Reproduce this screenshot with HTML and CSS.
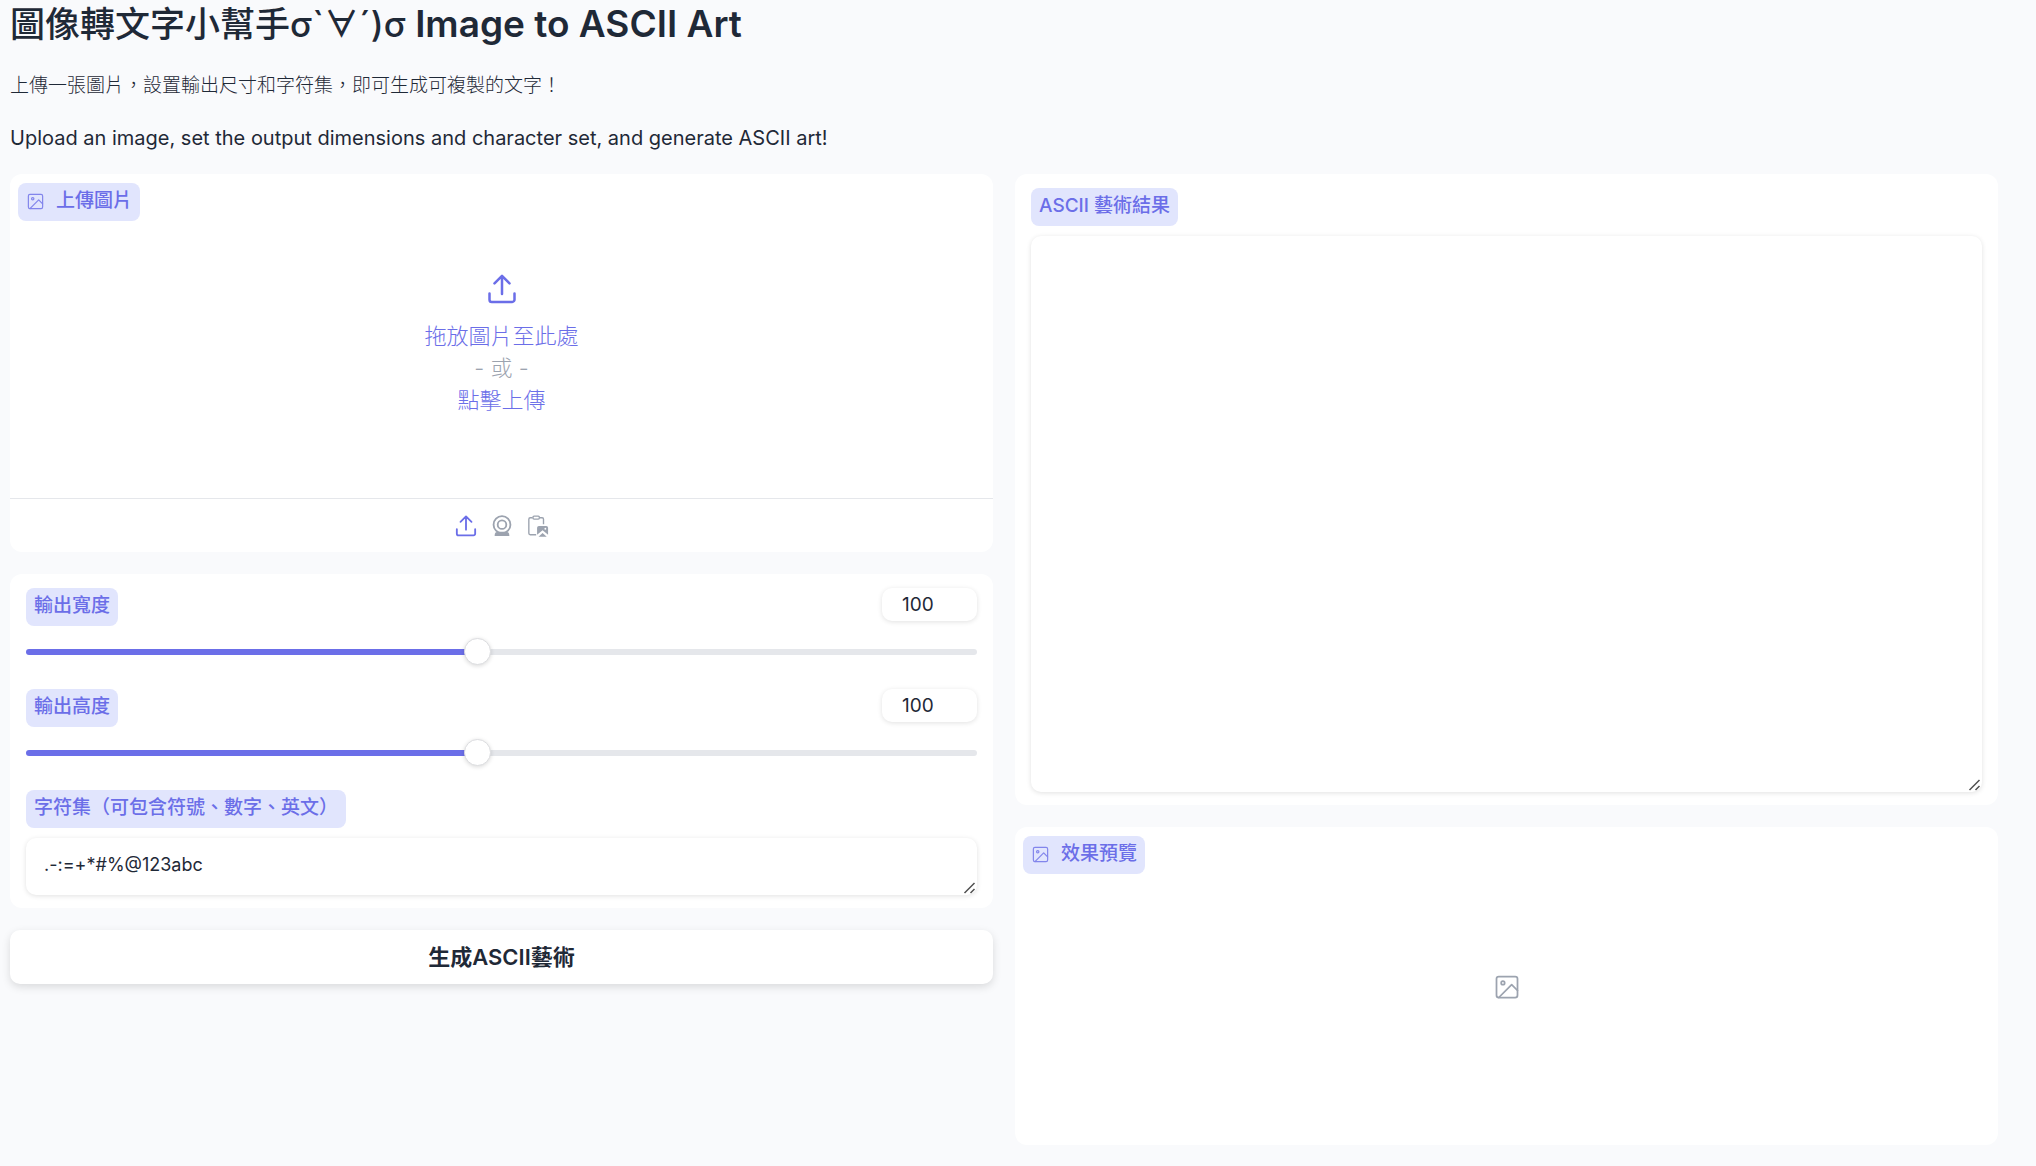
FILE: index.html
```html
<!DOCTYPE html>
<html lang="zh-Hant">
<head>
<meta charset="utf-8">
<meta name="viewport" content="width=device-width, initial-scale=1">
<title>圖像轉文字小幫手</title>
<link rel="stylesheet" href="styles.css">
</head>
<body>
<svg class="sprite" aria-hidden="true">
  <symbol id="icon-image" viewBox="0 0 24 24" fill="none" stroke="currentColor" stroke-width="1.5" stroke-linecap="round" stroke-linejoin="round">
    <rect x="3" y="3" width="18" height="18" rx="2"/>
    <circle cx="8.5" cy="8.5" r="1.5"/>
    <path d="M21 15l-5-5L5 21"/>
  </symbol>
  <symbol id="icon-upload" viewBox="0 0 24 24" fill="none" stroke="currentColor" stroke-width="2" stroke-linecap="round" stroke-linejoin="round">
    <path d="M2 15.500v5A1.800 1.800 0 0 0 3.800 22.300h16.400A1.800 1.800 0 0 0 22 20.500v-5M12 16V1.500M6 7.500l6-6 6 6"/>
  </symbol>
  <symbol id="icon-webcam" viewBox="0 0 24 24" fill="none" stroke="currentColor" stroke-width="2">
    <circle cx="12" cy="10.500" r="9.200"/>
    <circle cx="12" cy="10.500" r="4.700"/>
    <path d="M5 22c0-2 1.500-2.700 3-2.700h8c1.500 0 3 .7 3 2.700z" fill="currentColor"/>
  </symbol>
  <symbol id="icon-paste" viewBox="0 0 24 24" fill="none" stroke="currentColor" stroke-width="1.500">
    <path d="M10 21.500H3.500a1.500 1.500 0 0 1-1.500-1.500V4.500A1.500 1.500 0 0 1 3.500 3H6m8 0h2.500A1.500 1.500 0 0 1 18 4.500V10"/>
    <rect x="6.500" y="1.200" width="7" height="3.300" rx="1.200"/>
    <path d="M13 12h8a2 2 0 0 1 2 2v7.500l-6-5-6 5V14a2 2 0 0 1 2-2zM12.500 23.700l4.500-4.200 4.500 4.200z" fill="currentColor" stroke="none"/>
    <circle cx="20" cy="15" r="1" fill="#fff" stroke="none"/>
  </symbol>
</svg>
<main class="app">
  <header class="intro">
    <h1 class="title">圖像轉文字小幫手σ`∀´)σ <span class="title-en" lang="en">Image to ASCII Art</span></h1>
    <p class="lead">上傳一張圖片，設置輸出尺寸和字符集，即可生成可複製的文字！</p>
    <p class="lead lead-en" lang="en">Upload an image, set the output dimensions and character set, and generate ASCII art!</p>
  </header>
  <div class="columns">
    <div class="column">
      <section class="card upload">
        <h2 class="tag tag-icon"><svg class="tag-svg"><use href="#icon-image"/></svg>上傳圖片</h2>
        <button type="button" class="dropzone">
          <svg class="drop-svg"><use href="#icon-upload"/></svg>
          <span>拖放圖片至此處</span>
          <span class="or">- 或 -</span>
          <span>點擊上傳</span>
        </button>
        <div class="sources">
          <button type="button" class="source active" aria-label="上傳"><svg><use href="#icon-upload"/></svg></button>
          <button type="button" class="source" aria-label="攝影機"><svg><use href="#icon-webcam"/></svg></button>
          <button type="button" class="source" aria-label="貼上"><svg><use href="#icon-paste"/></svg></button>
        </div>
      </section>
      <section class="card form">
        <div class="field">
          <div class="field-head">
            <label class="tag" for="width">輸出寬度</label>
            <input class="number" type="number" id="width" value="100" min="10" max="200">
          </div>
          <input class="slider" type="range" aria-label="輸出寬度" value="100" min="10" max="200">
        </div>
        <div class="field">
          <div class="field-head">
            <label class="tag" for="height">輸出高度</label>
            <input class="number" type="number" id="height" value="100" min="10" max="200">
          </div>
          <input class="slider" type="range" aria-label="輸出高度" value="100" min="10" max="200">
        </div>
        <div class="field">
          <label class="tag" for="charset">字符集（可包含符號、數字、英文）</label>
          <textarea class="box charset" id="charset" rows="1">.-:=+*#%@123abc</textarea>
        </div>
      </section>
      <button type="button" class="generate">生成ASCII藝術</button>
    </div>
    <div class="column">
      <section class="card form">
        <div class="field">
          <label class="tag" for="result">ASCII 藝術結果</label>
          <textarea class="box result" id="result"></textarea>
        </div>
      </section>
      <section class="card preview">
        <h2 class="tag tag-icon"><svg class="tag-svg"><use href="#icon-image"/></svg>效果預覽</h2>
        <div class="empty"><svg class="empty-svg"><use href="#icon-image"/></svg></div>
      </section>
    </div>
  </div>
</main>
</body>
</html>
```
FILE: styles.css
```css
:root {
  --accent: #6b6ee8;
  --accent-soft: #e1e5fd;
  --ink: #1f2937;
  --muted: #9ca3af;
  --line: #e5e7eb;
}

* {
  box-sizing: border-box;
}

body {
  margin: 0;
  background: #f9fafc;
  color: var(--ink);
  font: 400 19px/28px Inter, "Noto Sans CJK TC", sans-serif;
}

button,
input,
textarea {
  font: inherit;
  color: inherit;
  border: 0;
  margin: 0;
}

.sprite {
  display: none;
}

.app {
  padding: 0 38px 20px 10px;
}

.intro {
  display: flex;
  flex-direction: column;
  gap: 24px;
  padding-bottom: 22px;
}

.title {
  margin: 0;
  font-size: 35px;
  line-height: 48px;
  font-weight: 500;
}

.title-en {
  font-size: 37px;
  font-weight: 600;
}

.lead {
  margin: 0;
  font-weight: 300;
}

.lead-en {
  font-size: 20px;
  font-weight: 400;
}

.columns {
  display: grid;
  grid-template-columns: 1fr 1fr;
  gap: 22px;
  align-items: start;
}

.column {
  display: flex;
  flex-direction: column;
  gap: 22px;
  min-width: 0;
}

.card {
  background: #fff;
  border-radius: 12px;
}

.tag {
  display: inline-flex;
  align-items: center;
  align-self: flex-start;
  margin: 0;
  padding: 4px 8px 6px;
  border-radius: 8px;
  background: var(--accent-soft);
  color: var(--accent);
  font-size: 19px;
  line-height: 28px;
  font-weight: 500;
}

.tag-icon {
  gap: 11px;
}

.tag-svg {
  width: 19px;
  height: 19px;
  opacity: 0.8;
}

.upload,
.preview {
  display: flex;
  flex-direction: column;
}

.upload > .tag,
.preview > .tag {
  margin: 9px 8px 0;
}

.dropzone {
  display: flex;
  flex-direction: column;
  align-items: center;
  height: 277px;
  padding: 53px 0 0;
  background: none;
  color: var(--accent);
  font-size: 22px;
  line-height: 32px;
  font-weight: 300;
}

.drop-svg {
  width: 30px;
  height: 30px;
  margin-bottom: 16px;
}

.or {
  color: var(--muted);
}

.sources {
  display: flex;
  justify-content: center;
  align-items: center;
  gap: 14px;
  height: 54px;
  border-top: 1px solid var(--line);
}

.source {
  display: flex;
  padding: 0;
  background: none;
  color: var(--muted);
}

.source svg {
  width: 22px;
  height: 22px;
}

.source.active {
  color: var(--accent);
}

.form {
  display: flex;
  flex-direction: column;
  gap: 21px;
  padding: 14px 16px 13px;
}

.field {
  display: flex;
  flex-direction: column;
  gap: 10px;
}

.field-head {
  display: flex;
  justify-content: space-between;
  align-items: flex-start;
}

.number,
.box {
  background: #fff;
  border-radius: 10px;
  box-shadow: 0 1px 5px rgba(0, 0, 0, 0.12);
  outline: 0;
}

.number {
  width: 95px;
  height: 33px;
  padding: 0 20px;
  appearance: textfield;
}

.number::-webkit-inner-spin-button {
  appearance: none;
}

.slider {
  appearance: none;
  width: 100%;
  height: 32px;
  background: none;
}

.slider::-webkit-slider-runnable-track {
  height: 6px;
  border-radius: 3px;
  background: linear-gradient(to right, var(--accent) 47%, var(--line) 47%);
}

.slider::-webkit-slider-thumb {
  appearance: none;
  width: 27px;
  height: 27px;
  margin-top: -11px;
  border: 1px solid #dcdde0;
  border-radius: 50%;
  background: #fff;
  box-shadow: 0 1px 4px rgba(0, 0, 0, 0.15);
}

.box {
  display: block;
  width: 100%;
  padding: 13px 18px;
  resize: vertical;
}

.box::-webkit-resizer {
  background: url("data:image/svg+xml,%3Csvg xmlns='http://www.w3.org/2000/svg' width='15' height='15'%3E%3Cpath d='M2.500 13L12.500 3M8.500 13L12.500 9' stroke='%23505050' stroke-width='1.500' fill='none'/%3E%3C/svg%3E") right bottom no-repeat;
}

.charset {
  height: 57px;
  font-size: 18px;
}

.result {
  height: 556px;
}

.generate {
  height: 54px;
  border-radius: 10px;
  background: #fff;
  box-shadow: 0 3px 8px rgba(0, 0, 0, 0.13);
  font-size: 22px;
  font-weight: 600;
}

.preview {
  min-height: 318px;
}

.empty {
  display: flex;
  flex: 1;
  align-items: center;
  justify-content: center;
  padding-bottom: 46px;
  color: var(--muted);
}

.empty-svg {
  width: 28px;
  height: 28px;
}
```
